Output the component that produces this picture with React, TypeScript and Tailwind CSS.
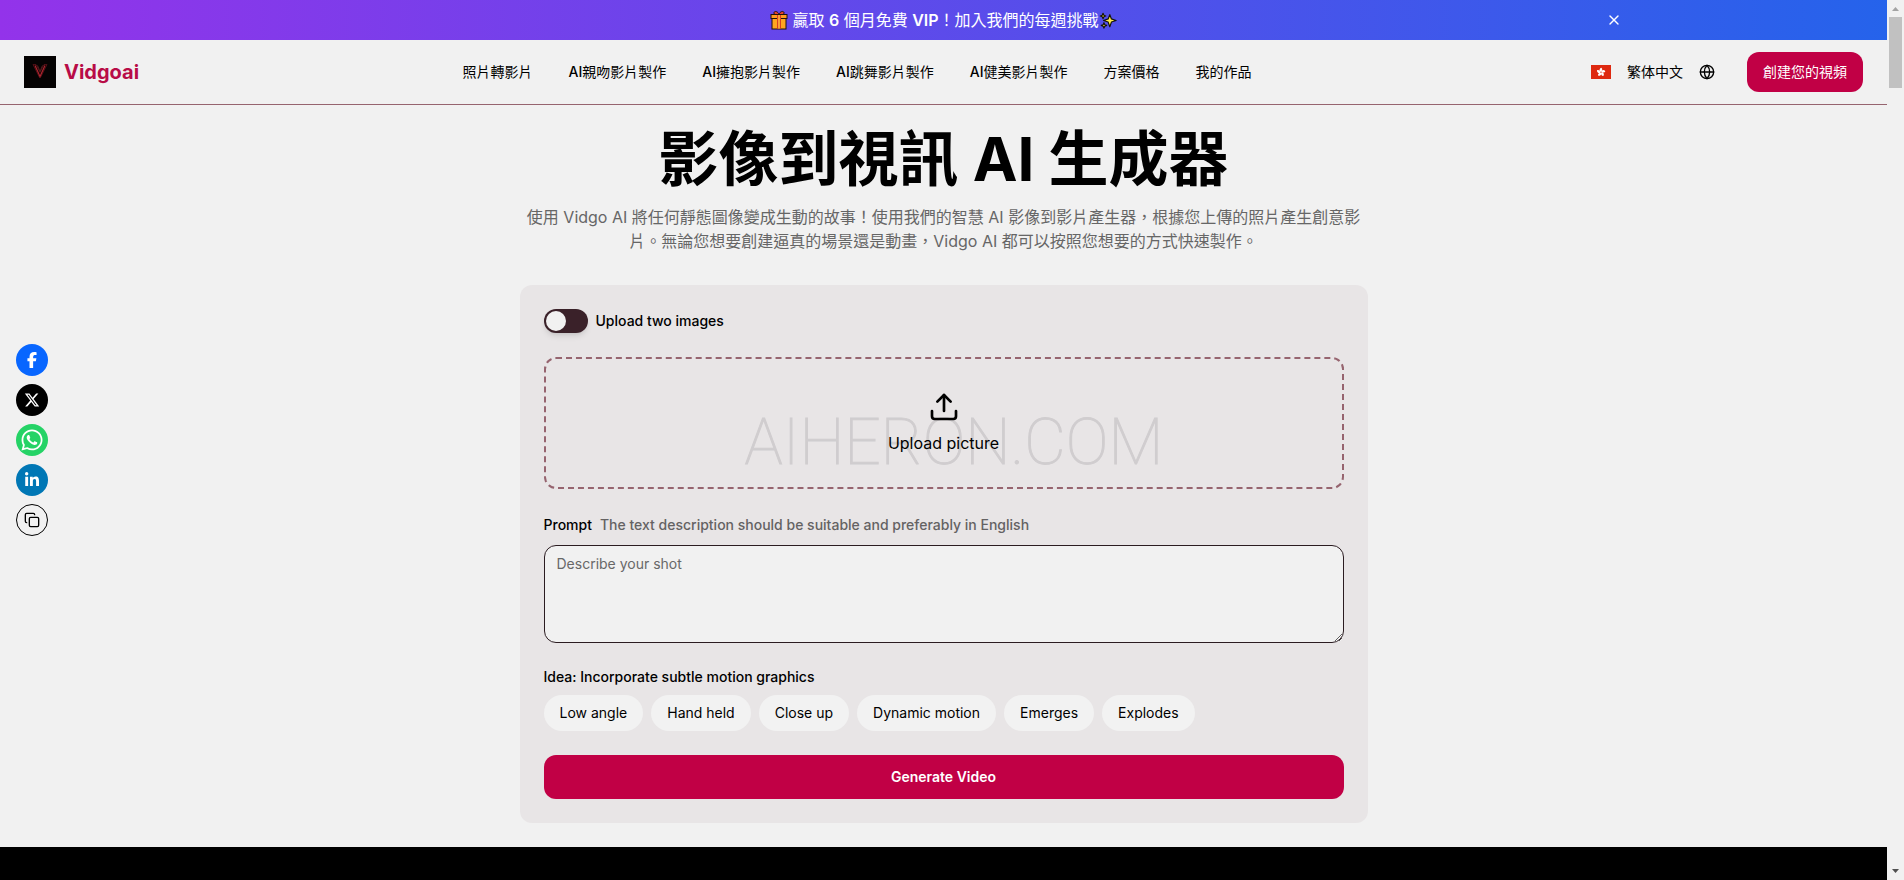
import React from "react";
import { Copy, Globe, Upload, X } from "lucide-react";
import { FaFacebookF, FaLinkedinIn, FaWhatsapp, FaXTwitter } from "react-icons/fa6";

const navItems = [
  { latin: "", label: "照片轉影片" },
  { latin: "AI", label: "親吻影片製作" },
  { latin: "AI", label: "擁抱影片製作" },
  { latin: "AI", label: "跳舞影片製作" },
  { latin: "AI", label: "健美影片製作" },
  { latin: "", label: "方案價格" },
  { latin: "", label: "我的作品" },
];

const ideas = ["Low angle", "Hand held", "Close up", "Dynamic motion", "Emerges", "Explodes"];

function GiftIcon() {
  return (
    <svg viewBox="0 0 18 20" className="h-5 w-[18px]" aria-hidden="true">
      <path d="M9 5C6 5 3.500 4.200 4 2.500S7.800 1 9 4.500C10.200 1 13.500.8 14 2.500S12 5 9 5Z" fill="#e8442a" stroke="#23120c" strokeWidth="1" />
      <rect x="2" y="8" width="14" height="11" fill="#ffa51f" stroke="#23120c" />
      <rect x="1" y="4.500" width="16" height="4" fill="#ff9a1f" stroke="#23120c" />
      <rect x="7" y="5" width="4" height="13.500" fill="#d9401f" />
      <rect x="8.200" y="5" width="1.600" height="13.500" fill="#ffb83d" />
    </svg>
  );
}

function SparklesIcon() {
  return (
    <svg viewBox="0 0 20 20" className="size-[18px]" aria-hidden="true">
      <g fill="#ffe94a" stroke="#14120a" strokeWidth="1.300" strokeLinejoin="round">
        <path d="m12 4 1.800 4.800L19 10.500l-5.200 1.800L12 17.500l-1.800-5.200L5 10.500l5.200-1.700Z" />
        <path d="m4.500 2.500.9 2.200 2.100.8-2.100.9-.9 2.100-.9-2.100-2.100-.9 2.100-.8Z" />
        <path d="m5.500 13 .9 2.200 2.100.8-2.100.9-.9 2.100-.9-2.100-2.100-.9 2.100-.8Z" />
      </g>
    </svg>
  );
}

function LogoMark() {
  return (
    <svg viewBox="0 0 32 32" className="size-8" aria-hidden="true">
      <rect width="32" height="32" fill="#050303" />
      <g fill="none" strokeLinejoin="miter">
        <path d="M9 8.500h3l4 8 4-8h3L16.500 21.500h-1Z" stroke="#5c1219" strokeWidth=".8" />
        <path d="m11 9.500 5 11 5-11" stroke="#b0252f" strokeWidth="1.200" />
        <path d="m13.500 9.500 2.500 6 2.500-6" stroke="#5a2222" strokeWidth=".9" />
      </g>
    </svg>
  );
}

function HongKongFlag() {
  const petals = [0, 72, 144, 216, 288];
  return (
    <svg viewBox="0 0 20 14" className="h-[14px] w-5" aria-hidden="true">
      <rect width="20" height="14" fill="#de2910" />
      <g fill="#fff" transform="translate(10 7.200)">
        {petals.map((a) => (
          <path key={a} d="M0 0C-2.200-1-1.800-3.800.4-4.400 1.800-3.400 1.200-1.600 0 0Z" transform={`rotate(${a})`} />
        ))}
      </g>
      <circle cx="10" cy="7.200" r=".6" fill="#de2910" />
    </svg>
  );
}

function Banner() {
  return (
    <div className="bg-linear-to-r/srgb from-[#9333ea] to-[#2563eb] text-white">
      <div className="relative mx-auto flex h-10 max-w-[1400px] items-center justify-center px-4">
        <a href="#challenge" className="flex items-center text-base">
          <GiftIcon />
          <span className="pl-1">
            贏取 <span className="font-semibold">6</span> 個月免費 <span className="font-semibold">VIP</span>
            ！加入我們的每週挑戰
          </span>
          <SparklesIcon />
        </a>
        <button type="button" aria-label="Close" className="absolute right-4 p-1.5">
          <X className="size-4" />
        </button>
      </div>
    </div>
  );
}

function Header() {
  return (
    <header className="flex h-[65px] items-center justify-between border-b border-[#96646f] px-6">
      <a href="#home" className="flex items-center gap-2 text-xl font-bold text-[#b80c47]">
        <LogoMark />
        Vidgoai
      </a>
      <nav className="flex items-center gap-9 text-sm">
        {navItems.map((item) => (
          <a key={item.label} href="#nav">
            {item.latin && <span className="font-medium">{item.latin}</span>}
            {item.label}
          </a>
        ))}
      </nav>
      <div className="flex items-center gap-4">
        <button type="button" className="flex h-10 items-center gap-4 px-4 text-sm">
          <HongKongFlag />
          繁体中文
          <Globe className="size-4" />
        </button>
        <a href="#create" className="flex h-10 items-center rounded-xl bg-[#c10045] px-4 text-sm text-white">
          創建您的視頻
        </a>
      </div>
    </header>
  );
}

function ShareBar() {
  const round = "flex size-8 items-center justify-center rounded-full";
  return (
    <aside className="fixed top-1/2 left-4 flex -translate-y-1/2 flex-col gap-2 text-white">
      <a href="#facebook" aria-label="Facebook" className={`${round} bg-[#0866ff]`}>
        <FaFacebookF className="size-4" />
      </a>
      <a href="#x" aria-label="X" className={`${round} bg-black`}>
        <FaXTwitter className="size-4" />
      </a>
      <a href="#whatsapp" aria-label="WhatsApp" className={`${round} bg-[#25d366]`}>
        <FaWhatsapp className="size-6" />
      </a>
      <a href="#linkedin" aria-label="LinkedIn" className={`${round} bg-[#0077b5]`}>
        <FaLinkedinIn className="size-4" />
      </a>
      <button type="button" aria-label="Copy link" className={`${round} border border-black text-black`}>
        <Copy className="size-4" />
      </button>
    </aside>
  );
}

function GeneratorForm() {
  return (
    <form className="flex flex-col gap-6 rounded-xl bg-[#e8e5e6] p-6 text-sm">
      <div className="flex items-center gap-2">
        <input
          id="two-images"
          type="checkbox"
          role="switch"
          className="h-6 w-11 appearance-none rounded-full bg-[#3a2129] p-0.5 shadow-md before:block before:size-5 before:rounded-full before:bg-[#f1f1f1] checked:before:translate-x-5"
        />
        <label htmlFor="two-images" className="font-medium">
          Upload two images
        </label>
      </div>

      <label className="relative flex cursor-pointer flex-col items-center gap-2 rounded-xl border-2 border-dashed border-[#96646f] py-8 text-base">
        <span
          aria-hidden="true"
          className="pointer-events-none absolute bottom-2 left-1/4 font-['Roboto',sans-serif] text-[64px] leading-[72px] font-thin text-[#d0cdcf] [-webkit-text-stroke:1px_#d0cdcf]"
        >
          AIHERON.COM
        </span>
        <Upload className="relative size-8" />
        <span className="relative">Upload picture</span>
        <input type="file" accept="image/*" className="sr-only" />
      </label>

      <div className="flex flex-col gap-2">
        <div className="flex h-6 items-center gap-2 font-medium">
          <label htmlFor="prompt">Prompt</label>
          <span className="text-[#646263]">The text description should be suitable and preferably in English</span>
        </div>
        <textarea
          id="prompt"
          placeholder="Describe your shot"
          className="block h-[98px] w-full resize-y rounded-xl border border-[#2b1c21] bg-[#f1f1f1] px-3 py-2 placeholder:text-[#686868]"
        />
      </div>

      <div className="flex flex-col gap-2">
        <p className="font-medium">Idea: Incorporate subtle motion graphics</p>
        <div className="flex flex-wrap gap-2">
          {ideas.map((idea) => (
            <button key={idea} type="button" className="h-9 rounded-full bg-[#f2f2f2] px-4">
              {idea}
            </button>
          ))}
        </div>
      </div>

      <button type="button" className="h-11 rounded-xl bg-[#c10045] font-semibold text-white">
        Generate Video
      </button>
    </form>
  );
}

function ScrollRail() {
  return (
    <div aria-hidden="true" className="sticky top-0 flex h-screen w-[17px] shrink-0 flex-col items-center bg-[#f1f1f1]">
      <svg viewBox="0 0 17 17" className="size-[17px] shrink-0">
        <path d="m5 11 3.500-4 3.500 4Z" fill="#a3a3a3" />
      </svg>
      <div className="h-[71px] w-[13px] bg-[#c1c1c1]" />
      <svg viewBox="0 0 17 17" className="mt-auto size-[17px] shrink-0">
        <path d="m5 6 3.500 4L12 6Z" fill="#505050" />
      </svg>
    </div>
  );
}

export default function App() {
  return (
    <div className="flex min-h-screen bg-[#f1f1f1] font-['Inter','Noto_Sans_CJK_TC',sans-serif] text-black">
      <div className="flex min-w-0 flex-1 flex-col">
        <Banner />
        <Header />
        <main className="mx-auto w-full max-w-[848px] py-6">
          <h1 className="text-center text-6xl leading-[60px] font-bold">影像到視訊 AI 生成器</h1>
          <p className="mt-4 mb-8 text-center text-base text-[#666]">
            使用 Vidgo AI 將任何靜態圖像變成生動的故事！使用我們的智慧 AI 影像到影片產生器，根據您上傳的照片產生創意影片。無論您想要創建逼真的場景還是動畫，Vidgo AI 都可以按照您想要的方式快速製作。
          </p>
          <GeneratorForm />
        </main>
        <section className="flex-1 bg-black" />
      </div>
      <ScrollRail />
      <ShareBar />
    </div>
  );
}
